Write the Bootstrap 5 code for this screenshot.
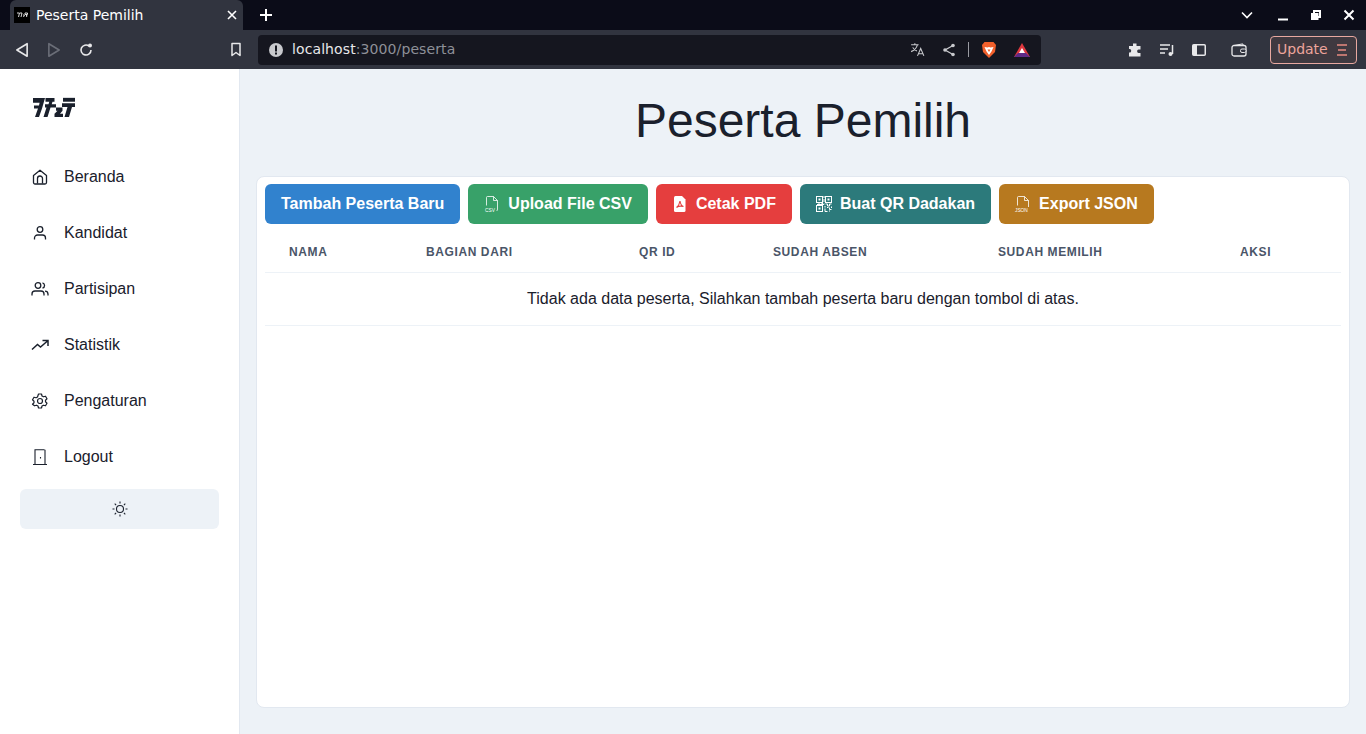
<!DOCTYPE html>
<html lang="en">
<head>
  <meta charset="UTF-8" />
  <meta name="viewport" content="width=device-width, initial-scale=1" />
  <title>Peserta Pemilih</title>
  <link href="https://cdn.jsdelivr.net/npm/bootstrap@5.3.0/dist/css/bootstrap.min.css" rel="stylesheet">
  <style>
    html, body { height: 100%; overflow: hidden; }
    body { font-family: "Liberation Sans", Arial, sans-serif; color: #1a202c; background: #edf2f7; }
    .frame { height: 734px; }

    /* browser chrome */
    .tabstrip { height: 30px; background: #0b0c18; color: #fff; font-family: "DejaVu Sans", sans-serif; font-size: 14px; }
    .tab-active { width: 233px; margin-left: 10px; height: 30px; padding: 0 3px 0 4px; background: #31343f; border-radius: 6px 6px 0 0; }
    .favicon { width: 16px; height: 16px; margin-right: 6px; flex: none; }
    .tab-title { flex-grow: 1; }
    .win-controls { margin-right: 1px; }
    .win-btn { width: 33px; display: flex; justify-content: center; }
    .win-chevron { margin-right: 3px; }
    .toolbar { height: 39px; background: #31343f; color: #e8e8ea; font-family: "DejaVu Sans", sans-serif; font-size: 14px; }
    .tool-box { width: 32px; display: flex; justify-content: center; }
    .tool-first { margin-left: 6px; }
    .tool-mark { margin-left: 118px; }
    .tool-ext { margin-left: 78px; }
    .urlbar { width: 783px; height: 30px; margin-left: 6px; padding: 0 10px; background: #15161f; border-radius: 4px; }
    .url-host { color: #e8e8ea; letter-spacing: .1px; }
    .url-rest { color: #8e9098; letter-spacing: .1px; }
    .url-share { margin-left: 16px; }
    .url-sep { width: 1px; height: 15px; background: #9a9ba2; margin: 0 12px; }
    .update-btn { width: 87px; height: 28px; margin-left: 15px; padding: 0 9px 0 6px; border: 1px solid #e8a8a0; border-radius: 4px; color: #eda59c; background: #3f3940; }

    /* sidebar */
    .side { width: 240px; background: #fff; border-right: 1px solid #e2e8f0; padding: 0 20px; }
    .side-logo { height: 88px; padding: 28px 0 0 12px; }
    .side-link { height: 40px; margin-bottom: 16px; padding: 0 12px; color: #1a202c; font-size: 16px; gap: 16px; text-decoration: none; }
    .side-link:last-of-type { margin-bottom: 13px; }
    .side-ico { width: 16px; height: 16px; flex: none; overflow: visible; }
    .theme-btn { width: 199px; height: 40px; margin-top: -1px; background: #edf2f7; border: 0; border-radius: 6px; }

    /* main */
    .page-title { font-size: 48px; font-weight: 400; line-height: 1; margin: 0; padding: 28px 0 31px; text-align: center; color: #1a202c; }
    .main-area { padding: 0 16px 26px; }
    .data-panel { height: 532px; padding: 7px 8px; background: #fff; border: 1px solid #e2e8f0; border-radius: 8px; }
    .act-btn { height: 40px; padding: 0 16px; border: 0; border-radius: 6px; color: #fff; font-size: 16px; font-weight: 700; gap: 8px; white-space: nowrap; }
    .act-blue { background: #3182ce; }
    .act-green { background: #38a169; }
    .act-red { background: #e53e3e; }
    .act-teal { background: #2c7a7b; }
    .act-amber { background: #b7791f; }
    .act-ico { width: 16px; height: 16px; flex: none; overflow: visible; }
    .act-ico text { font-family: "Liberation Sans", sans-serif; font-weight: 400; fill: #fff; stroke: none; }
    .peserta-table { table-layout: fixed; width: 100%; margin: 8px 0 0; }
    .peserta-table th { padding: 12px 24px; height: 40px; color: #4a5568; font-size: 12px; font-weight: 700; letter-spacing: .6px; line-height: 16px; border-bottom: 1px solid #edf2f7; }
    .peserta-table td { height: 53px; padding: 0; font-size: 16px; color: #1a202c; text-align: center; vertical-align: middle; border-bottom: 1px solid #edf2f7; }
    .w-nama { width: 137px; }
    .w-bagian { width: 213px; }
    .w-qr { width: 134px; }
    .w-absen { width: 225px; }
    .w-memilih { width: 242px; }
    .w-aksi { width: 125px; }
  </style>
</head>
<body>
<div class="frame d-flex flex-column">

  <!-- browser chrome -->
  <div class="tabstrip d-flex align-items-center">
    <div class="tab-active d-flex align-items-center">
      <svg class="favicon" viewBox="0 0 16 16"><rect width="16" height="16" fill="#000"/><path d="M3 6h2.500L4.500 10M6 6h2L7 10M9 8h1.500L9.500 10M11 6h2.500v1.500H11zM12 8.500h1L12.500 10" fill="none" stroke="#d8d8d8" stroke-width="1"/></svg>
      <span class="tab-title">Peserta Pemilih</span>
      <svg width="16" height="16" viewBox="0 0 16 16"><path d="M4 4l8 8M12 4l-8 8" stroke="#fff" stroke-width="1.6"/></svg>
    </div>
    <svg width="14" height="14" viewBox="0 0 14 14" class="ms-3"><path d="M7 1v12M1 7h12" stroke="#fff" stroke-width="2"/></svg>
    <div class="win-controls d-flex align-items-center ms-auto">
      <span class="win-btn win-chevron"><svg width="12" height="8" viewBox="0 0 12 8"><path d="M1 1.500l5 5 5-5" fill="none" stroke="#fff" stroke-width="1.6"/></svg></span>
      <span class="win-btn"><svg width="12" height="12" viewBox="0 0 12 12"><path d="M1 10.500h10" stroke="#fff" stroke-width="2"/></svg></span>
      <span class="win-btn"><svg width="12" height="12" viewBox="0 0 12 12"><path d="M3 1h8v8H8.500v2H1V4h2z M5 3v1h3.500v3H9V3z" fill="#fff" fill-rule="evenodd"/></svg></span>
      <span class="win-btn"><svg width="12" height="12" viewBox="0 0 12 12"><path d="M1.500 1.500l9 9M10.500 1.500l-9 9" stroke="#fff" stroke-width="2"/></svg></span>
    </div>
  </div>
  <div class="toolbar d-flex align-items-center">
    <span class="tool-box tool-first"><svg width="16" height="16" viewBox="0 0 14 14"><path d="M11.500 1.500v11L2.500 7z" fill="none" stroke="#e8e8ea" stroke-width="1.400" stroke-linejoin="round"/></svg></span>
    <span class="tool-box"><svg width="16" height="16" viewBox="0 0 14 14"><path d="M2.500 1.500v11l9-5.500z" fill="none" stroke="#6b6e78" stroke-width="1.400" stroke-linejoin="round"/></svg></span>
    <span class="tool-box"><svg width="16" height="16" viewBox="0 0 16 16"><path d="M13 8a5 5 0 1 1-2-4" fill="none" stroke="#e8e8ea" stroke-width="1.600"/><circle cx="12" cy="3.500" r="2" fill="#e8e8ea"/></svg></span>
    <span class="tool-box tool-mark"><svg width="12" height="15" viewBox="0 0 12 15"><path d="M2 1.500h8v12L6 10.500 2 13.500z" fill="none" stroke="#e8e8ea" stroke-width="1.500" stroke-linejoin="round"/></svg></span>
    <div class="urlbar d-flex align-items-center">
      <svg width="16" height="16" viewBox="0 0 16 16" class="me-2"><circle cx="8" cy="8" r="7" fill="#c8c9cd"/><rect x="7" y="3.500" width="2" height="6" fill="#15161f"/><rect x="7" y="10.500" width="2" height="2" fill="#15161f"/></svg>
      <span><span class="url-host">localhost</span><span class="url-rest">:3000/peserta</span></span>
      <svg width="17" height="17" viewBox="0 0 16 16" class="ms-auto"><path d="M2 3.500h7M5.500 2v1.500M8 3.500C7 7 5 9 2 10M3.500 6c1 2 2.500 3 4 3.500M8 14l3-7 3 7M9 12h4" fill="none" stroke="#c8c9cd" stroke-width="1"/></svg>
      <svg width="14" height="14" viewBox="0 0 14 14" class="url-share"><circle cx="11" cy="2.500" r="1.800" fill="#c8c9cd"/><circle cx="11" cy="11.500" r="1.800" fill="#c8c9cd"/><circle cx="3" cy="7" r="1.800" fill="#c8c9cd"/><path d="M11 2.500L3 7l8 4.500" fill="none" stroke="#c8c9cd" stroke-width="1.300"/></svg>
      <span class="url-sep"></span>
      <svg width="16" height="18" viewBox="0 0 16 18"><path d="M3.500 1h9l2.500 3-1 7-6 6-6-6-1-7z" fill="#f1602c"/><path d="M3.500 6l3 .500L8 6l1.500.500 3-.500-2 4.500L8 14l-2.500-3.500z" fill="#fff"/><path d="M6.500 8.500h3L8 11z" fill="#f1602c"/></svg>
      <svg width="18" height="16" viewBox="0 0 18 16" class="ms-3"><path d="M9 1l8 14H1z" fill="#e0383e"/><path d="M1 15l4-4h8l4 4z" fill="#5d2a86"/><path d="M9 6l3 5H6z" fill="#fff"/></svg>
    </div>
    <span class="tool-box tool-ext"><svg width="16" height="16" viewBox="0 0 16 16"><path d="M6 1.500h3.500v2.500h4v3.500H11.500a1.800 1.800 0 0 0 0 3.500h2v3.500H2V10.500a1.800 1.800 0 1 0 0-3.500V4h4z" fill="#e8e8ea"/></svg></span>
    <span class="tool-box"><svg width="16" height="14" viewBox="0 0 16 14"><path d="M1 2h10M1 6h8M1 10h5" stroke="#e8e8ea" stroke-width="1.500"/><path d="M13.500 2v9" stroke="#e8e8ea" stroke-width="1.500"/><circle cx="11.500" cy="11" r="2" fill="#e8e8ea"/></svg></span>
    <span class="tool-box"><svg width="14" height="12" viewBox="0 0 14 12"><rect x=".75" y=".75" width="12.500" height="10.500" rx="1" fill="none" stroke="#e8e8ea" stroke-width="1.500"/><rect x="1" y="1" width="4" height="10" fill="#e8e8ea"/></svg></span>
    <span class="tool-box ms-2"><svg width="16" height="14" viewBox="0 0 16 14"><rect x="1" y="2.500" width="14" height="10.500" rx="2" fill="none" stroke="#e8e8ea" stroke-width="1.300"/><path d="M3 2.500L11 1h1v1.500" fill="none" stroke="#e8e8ea" stroke-width="1"/><rect x="9.500" y="6" width="5.500" height="3.500" rx="1.500" fill="#31343f" stroke="#e8e8ea"/></svg></span>
    <div class="update-btn d-flex align-items-center justify-content-between">
      <span>Update</span>
      <svg width="10" height="12" viewBox="0 0 10 12"><path d="M0 1h10M1 6h8M0 11h10" stroke="#e88a80" stroke-width="1.500"/></svg>
    </div>
  </div>

  <div class="d-flex flex-grow-1 overflow-hidden">
    <!-- sidebar -->
    <aside class="side d-flex flex-column flex-shrink-0">
      <div class="side-logo">
        <svg class="d-block" width="43" height="21" viewBox="0 0 43 20" preserveAspectRatio="none"><g fill="#1a202c"><path d="M1 1h12l-1.500 5-1.500 5-3 8H3l3-8H2V8h5l.6-2.500H1z"/><path d="M13.500 1h9v3.500h-2l-.8 2.500H24v3h-5.500l-3 9h-4l3-9H13V7h3.500l.8-2.500h-3.800z"/><path d="M24 10h6.500v3l-2.500 3h3v3H22.500v-3l3-3H24z"/><path d="M31 .8h12v3.700H31z"/><path d="M30 6h13v3.500h-3l-3 9.500h-4.500l3-9.500H30z"/></g></svg>
      </div>
      <a class="side-link d-flex align-items-center" href="#">
        <svg class="side-ico" viewBox="0 0 16 16" fill="none" stroke="#1a202c" stroke-width="1.300" stroke-linejoin="round"><path d="M1.500 6.500L8 1.200l6.500 5.300v7a1.500 1.500 0 0 1-1.500 1.500H3a1.500 1.500 0 0 1-1.500-1.500z"/><path d="M5.500 14.500V9.500a2.500 2.500 0 0 1 5 0v5"/></svg>
        <span>Beranda</span>
      </a>
      <a class="side-link d-flex align-items-center" href="#">
        <svg class="side-ico" viewBox="0 0 16 16" fill="none" stroke="#1a202c" stroke-width="1.300"><circle cx="8" cy="4.500" r="2.800"/><path d="M2.500 14.500v-1.500a3 3 0 0 1 3-3h5a3 3 0 0 1 3 3v1.500"/></svg>
        <span>Kandidat</span>
      </a>
      <a class="side-link d-flex align-items-center" href="#">
        <svg class="side-ico" viewBox="0 0 16 16" fill="none" stroke="#1a202c" stroke-width="1.300"><circle cx="6" cy="4.500" r="2.800"/><path d="M0 14.500v-1.500a3 3 0 0 1 3-3h6a3 3 0 0 1 3 3v1.500M10.500 1.800a2.800 2.800 0 0 1 0 5.400M13 10.200a3 3 0 0 1 3 2.800v1.500"/></svg>
        <span>Partisipan</span>
      </a>
      <a class="side-link d-flex align-items-center" href="#">
        <svg class="side-ico" viewBox="0 0 16 16" fill="none" stroke="#1a202c" stroke-width="1.500"><path d="M0 12.500l5.500-5 3 2.500L15.500 4M10.500 3.500h5.500V9"/></svg>
        <span>Statistik</span>
      </a>
      <a class="side-link d-flex align-items-center" href="#">
        <svg class="side-ico" viewBox="0 0 16 16" fill="none" stroke="#1a202c" stroke-width="1.200" stroke-linejoin="round"><circle cx="8" cy="8" r="2.500"/><path d="M6.500 1h3l.5 2 1.500.8 2-.6 1.500 2.600-1.500 1.400v1.600l1.500 1.400-1.500 2.600-2-.6-1.500.8-.5 2h-3l-.5-2-1.500-.8-2 .6L.5 11.200 2 9.800V8.200L.5 6.800 2 4.200l2 .6 1.500-.8z"/></svg>
        <span>Pengaturan</span>
      </a>
      <a class="side-link d-flex align-items-center" href="#">
        <svg class="side-ico" viewBox="0 0 16 16" fill="none" stroke="#1a202c" stroke-width="1.100"><path d="M1 15.500h14M3 15.500V.8h9.500M13 .8v14.700M8.500 8v1.500"/></svg>
        <span>Logout</span>
      </a>
      <button class="theme-btn d-flex align-items-center justify-content-center" type="button">
        <svg width="16" height="16" viewBox="0 0 16 16" fill="none" stroke="#1a202c" stroke-width="1.100"><circle cx="8" cy="8" r="3.500"/><path d="M8 .5v2M8 13.500v2M.5 8h2M13.500 8h2M2.700 2.700l1.400 1.400M11.900 11.900l1.400 1.400M2.700 13.300l1.400-1.400M11.900 4.100l1.400-1.400"/></svg>
      </button>
    </aside>

    <!-- main -->
    <main class="flex-grow-1 d-flex flex-column overflow-hidden">
      <h1 class="page-title">Peserta Pemilih</h1>
      <div class="main-area">
        <div class="data-panel">
          <div class="d-flex gap-2">
            <button class="act-btn act-blue d-flex align-items-center" type="button">Tambah Peserta Baru</button>
            <button class="act-btn act-green d-flex align-items-center" type="button">
              <svg class="act-ico" viewBox="0 0 16 16" fill="none" stroke="#fff" stroke-width=".8"><path d="M2.500 9.500V1.500a1 1 0 0 1 1-1h6l4 4V13a2 2 0 0 1-1 2M9.500 .5v4h4"/><text x="1" y="15.500" font-size="4.800">CSV</text></svg>
              Upload File CSV
            </button>
            <button class="act-btn act-red d-flex align-items-center" type="button">
              <svg class="act-ico" viewBox="0 0 16 16"><path d="M3.500 0h6.500l3.500 3.500V14.500a1.500 1.500 0 0 1-1.500 1.500H3.500A1.500 1.500 0 0 1 2 14.500v-13A1.500 1.500 0 0 1 3.500 0z" fill="#fff"/><path d="M8 5c-.5 3-1.500 5-3.500 6.500M8 5c.5 3 2 5 3.500 5.500M4.500 11.500c2-1.500 5-1.500 7-1" fill="none" stroke="#e53e3e" stroke-width="1.100"/></svg>
              Cetak PDF
            </button>
            <button class="act-btn act-teal d-flex align-items-center" type="button">
              <svg class="act-ico" viewBox="0 0 16 16" fill="none" stroke="#fff" stroke-width="1"><rect x=".5" y=".5" width="6" height="6"/><rect x="9.500" y=".5" width="6" height="6"/><rect x=".5" y="9.500" width="6" height="6"/><path d="M2.500 2.500h2v2h-2zM11.500 2.500h2v2h-2zM2.500 11.500h2v2h-2z" fill="#fff" stroke="none"/><path d="M8 0v2M8 3v3M8 7.500v1H1M3 7v1M5.500 7.500H7M9.500 8h2v2h2V8h2M9 10v1.500M9 12.500v3h2.500M11 11.500h1.500M13.500 11.500v2h2M13.500 14.500v1M15.500 10.500v1.500"/></svg>
              Buat QR Dadakan
            </button>
            <button class="act-btn act-amber d-flex align-items-center" type="button">
              <svg class="act-ico" viewBox="0 0 16 16" fill="none" stroke="#fff" stroke-width=".8"><path d="M2.500 9.500V1.500a1 1 0 0 1 1-1h6l4 4V11M9.500 .5v4h4"/><text x="0" y="15.500" font-size="4.800">JSON</text></svg>
              Export JSON
            </button>
          </div>
          <table class="peserta-table">
            <thead>
              <tr>
                <th class="w-nama">NAMA</th>
                <th class="w-bagian">BAGIAN DARI</th>
                <th class="w-qr">QR ID</th>
                <th class="w-absen">SUDAH ABSEN</th>
                <th class="w-memilih">SUDAH MEMILIH</th>
                <th class="w-aksi">AKSI</th>
              </tr>
            </thead>
            <tbody>
              <tr><td colspan="6">Tidak ada data peserta, Silahkan tambah peserta baru dengan tombol di atas.</td></tr>
            </tbody>
          </table>
        </div>
      </div>
    </main>
  </div>
</div>
<script src="https://cdn.jsdelivr.net/npm/bootstrap@5.3.0/dist/js/bootstrap.bundle.min.js"></script>
</body>
</html>
